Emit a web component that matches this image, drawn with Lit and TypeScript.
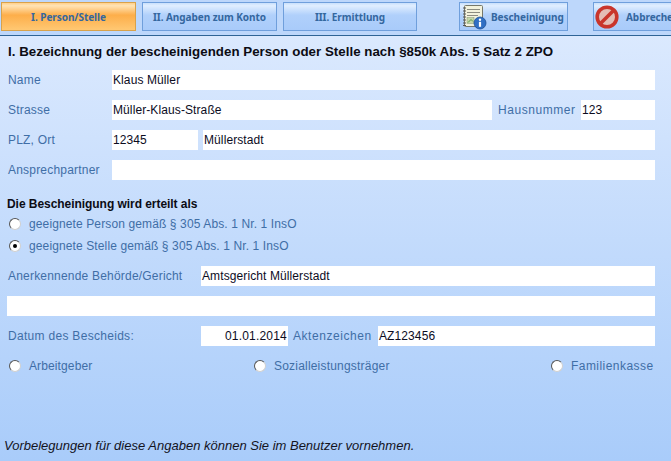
import { LitElement, html, css } from "lit";
import { customElement } from "lit/decorators.js";

const docIcon = html`<svg class="ic" width="26" height="26" viewBox="0 0 26 26">
  <rect x="3.5" y="1.5" width="18" height="21" rx="1" fill="#f3f2dc" stroke="#77786a"/>
  <g stroke="#8c8c80"><path d="M6 5.5h13M6 8.5h13M6 11.5h11"/></g>
  <rect x="6" y="13.5" width="7" height="6" fill="#c4d6a8" stroke="#8a9a78" stroke-width=".5"/>
  <path d="M7 18.5l3-3 2 2" stroke="#5a9a4a" fill="none"/>
  <g stroke="#555"><path d="M2 4h3M2 7h3M2 10h3M2 13h3M2 16h3M2 19h3M2 21.5h3"/></g>
  <circle cx="19" cy="19" r="6" fill="#2f6fc4" stroke="#1d4f94" stroke-width=".8"/>
  <circle cx="19" cy="15.8" r="1.2" fill="#fff"/>
  <rect x="17.9" y="17.8" width="2.2" height="5" fill="#fff"/>
</svg>`;
const stopIcon = html`<svg class="ic" width="24" height="24" viewBox="0 0 24 24">
  <circle cx="12" cy="12" r="9.8" fill="#e4bdb6" stroke="#c9352c" stroke-width="3.6"/>
  <path d="M18.5 5.5l-13 13" stroke="#c9352c" stroke-width="3.6"/>
</svg>`;

@customElement("app-root")
export class AppRoot extends LitElement {
  static styles = css`
    :host { display: block; width: 671px; height: 461px; overflow: hidden;
      font-family: "Liberation Sans", Arial, sans-serif; font-size: 12px; color: #3f6ea6;
      background: linear-gradient(#dbe9fe 35px, #a9ccfa 100%); }
    .bar { box-sizing: border-box; padding: 2px 0 0 1px; display: flex; align-items: flex-start;
      border-bottom: 1px solid #2f6496; background: #bdd7fb; height: 36px; overflow: hidden; }
    .btn { box-sizing: border-box; height: 29px; flex: none; display: flex; align-items: center; justify-content: center;
      border: 1px solid #6f9fdc; color: #34679f; font: 700 10px "Noto Sans", sans-serif; letter-spacing: -.05px;
      background: linear-gradient(#c9e0fc 0, #e0eeff 10%, #b0d0fb 45%, #a9cbfa 100%); }
    .t1 { width: 135px; background: linear-gradient(#ffd08a 0, #ffe3b4 10%, #fdae4a 45%, #ffc873 100%); border-color: #d9a24a; }
    .t2 { width: 135px; margin-left: 6px; }
    .t3 { width: 134px; margin-left: 6px; }
    .t4 { width: 109px; margin-left: 42px; gap: 4px; justify-content: flex-start; padding-left: 1px; }
    .t5 { width: 110px; margin-left: 25px; gap: 7px; justify-content: flex-start; padding-left: 1px; }
    .ic { flex: none; }
    .form { padding: 7px 16px 0 7px; }
    h1 { margin: 0 0 10px 1px; font: bold 13.3px/17px "Liberation Sans", sans-serif; color: #0c0c14; letter-spacing: .03px; }
    .row { display: flex; height: 20px; align-items: center; margin-bottom: 10px; }
    .lab { flex: none; padding-left: 1px; box-sizing: border-box; letter-spacing: .2px; }
    .w105 { width: 105px; } .w194 { width: 194px; }
    .wide { letter-spacing: .55px; }
    .mid { letter-spacing: .3px; }
    .ml5 { margin-left: 5px; }
    .hn { width: 84px; }
    .az { width: 85px; padding: 0; }
    .gap5 { width: 5px; }
    .inp { height: 20px; background: #fff; color: #0c0c1e; line-height: 20px; padding-left: 1px; box-sizing: border-box; white-space: nowrap; letter-spacing: .1px; }
    .grow { flex: 1; }
    .w74 { width: 74px; flex: none; } .w86 { width: 86px; flex: none; }
    .date { width: 87px; flex: none; text-align: right; padding-right: 1px; letter-spacing: .2px; }
    .sub { font-weight: bold; color: #0c0c14; height: 15px; line-height: 15px; margin: 17px 0 4px 0; letter-spacing: -.05px; }
    .radio { display: flex; align-items: center; height: 16px; margin-bottom: 6px; letter-spacing: .12px; }
    .dot { flex: none; width: 12px; height: 12px; margin: 0 8px 0 2px; border-radius: 50%; background: #fff;
      border: 1px solid #555; border-right-color: #d0d0d0; border-bottom-color: #d0d0d0; position: relative; box-sizing: border-box; }
    .dot.on::after { content: ""; position: absolute; left: 3px; top: 3px; width: 4px; height: 4px; border-radius: 50%; background: #000; }
    .aner { margin-top: 12px; }
    .opts { display: flex; height: 20px; align-items: center; }
    .opts .radio { margin: 0; }
    .o1 { width: 245px; } .o2 { width: 297px; }
    .o2 { letter-spacing: .2px; } .o3 { letter-spacing: .45px; }
    .foot { font-style: italic; font-size: 13px; color: #14141e; position: absolute; left: 4px; top: 438px; line-height: 15px; }
  `;
  render() {
    return html`
      <div class="bar">
        <div class="btn t1">I. Person/Stelle</div>
        <div class="btn t2">II. Angaben zum Konto</div>
        <div class="btn t3">III. Ermittlung</div>
        <div class="btn t4">${docIcon}<span>Bescheinigung</span></div>
        <div class="btn t5">${stopIcon}<span>Abbrechen</span></div>
      </div>
      <div class="form">
        <h1>I. Bezeichnung der bescheinigenden Person oder Stelle nach §850k Abs. 5 Satz 2 ZPO</h1>
        <div class="row"><div class="lab w105">Name</div><div class="inp grow">Klaus Müller</div></div>
        <div class="row"><div class="lab w105">Strasse</div><div class="inp grow">Müller-Klaus-Straße</div>
          <div class="lab wide ml5 hn">Hausnummer</div><div class="inp w74">123</div></div>
        <div class="row"><div class="lab w105">PLZ, Ort</div><div class="inp w86">12345</div>
          <div class="gap5"></div><div class="inp grow">Müllerstadt</div></div>
        <div class="row"><div class="lab w105">Ansprechpartner</div><div class="inp grow"></div></div>
        <div class="sub">Die Bescheinigung wird erteilt als</div>
        <div class="radio"><span class="dot"></span>geeignete Person gemäß § 305 Abs. 1 Nr. 1 InsO</div>
        <div class="radio"><span class="dot on"></span>geeignete Stelle gemäß § 305 Abs. 1 Nr. 1 InsO</div>
        <div class="row aner"><div class="lab w194">Anerkennende Behörde/Gericht</div><div class="inp grow">Amtsgericht Müllerstadt</div></div>
        <div class="row"><div class="inp grow"></div></div>
        <div class="row"><div class="lab w194 mid">Datum des Bescheids:</div>
          <div class="inp date">01.01.2014</div>
          <div class="lab wide ml5 az">Aktenzeichen</div><div class="inp grow">AZ123456</div></div>
        <div class="opts">
          <div class="radio o1"><span class="dot"></span>Arbeitgeber</div>
          <div class="radio o2"><span class="dot"></span>Sozialleistungsträger</div>
          <div class="radio o3"><span class="dot"></span>Familienkasse</div>
        </div>
      </div>
      <div class="foot">Vorbelegungen für diese Angaben können Sie im Benutzer vornehmen.</div>
    `;
  }
}
